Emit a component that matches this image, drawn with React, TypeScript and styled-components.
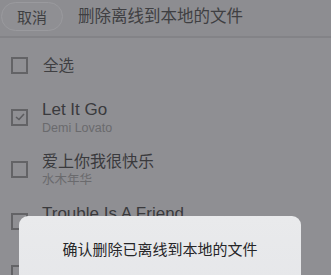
import * as React from 'react';
import styled, { createGlobalStyle } from 'styled-components';

const GlobalStyle = createGlobalStyle`
  html, body {
    margin: 0;
    padding: 0;
    background: #8f8f93;
    overflow: hidden;
  }
  body {
    font-family: 'Liberation Sans', 'Noto Sans CJK SC', sans-serif;
  }
`;

// rows below the dialog only show their checkbox / top of the title
const songs = [
  { title: 'Let It Go', artist: 'Demi Lovato', checked: true },
  { title: '爱上你我很快乐', artist: '水木年华', checked: false },
  { title: 'Trouble Is A Friend', artist: '', checked: false },
  { title: '', artist: '', checked: false },
];

export default function App() {
  return (
    <Screen>
      <GlobalStyle />
      <Header>
        <CancelButton>取消</CancelButton>
        <Title>删除离线到本地的文件</Title>
      </Header>
      <SelectAllRow>
        <CheckBox />
        <RowLabel>全选</RowLabel>
      </SelectAllRow>
      {songs.map((s, i) => (
        <SongRow key={i}>
          <CheckBox>
            {s.checked && (
              <svg width="10" height="8" viewBox="0 0 10 8">
                <path
                  d="M1 4 L4 6.5 L9 1"
                  fill="none"
                  stroke="#5c5c5f"
                  strokeWidth="1.6"
                />
              </svg>
            )}
          </CheckBox>
          {s.title && (
            <SongText>
              <SongTitle $latin={/^[A-Za-z]/.test(s.title)}>{s.title}</SongTitle>
              <SongArtist>{s.artist}</SongArtist>
            </SongText>
          )}
        </SongRow>
      ))}
      <Dialog>
        <DialogText>确认删除已离线到本地的文件</DialogText>
      </Dialog>
    </Screen>
  );
}

const Screen = styled.div`
  position: relative;
  width: 331px;
  height: 275px;
  overflow: hidden;
  background: #8f8f93;
`;

const Header = styled.div`
  display: flex;
  align-items: center;
  gap: 15px;
  height: 36px;
  padding: 0 0 0 1px;
  background: #8d8d91;
  border-bottom: 2px solid #838387;
`;

const CancelButton = styled.div`
  display: flex;
  align-items: center;
  justify-content: center;
  width: 60px;
  height: 27px;
  margin-top: -3px;
  border: 1px solid #9a9a9e;
  border-radius: 15px;
  background: #8f8f93;
  color: #3f3f42;
  font-size: 15px;
`;

const Title = styled.div`
  margin-top: -7px;
  color: #3f3f42;
  font-size: 16.5px;
`;

const SelectAllRow = styled.div`
  display: flex;
  align-items: center;
  gap: 15px;
  height: 52px;
  padding-left: 11px;
`;

const SongRow = styled.div`
  display: flex;
  align-items: center;
  gap: 14px;
  height: 52px;
  padding-left: 11px;
`;

const CheckBox = styled.div`
  box-sizing: border-box;
  display: flex;
  align-items: center;
  justify-content: center;
  width: 17px;
  height: 17px;
  margin-top: 2px;
  border: 2px solid #636366;
  flex-shrink: 0;
`;

const RowLabel = styled.div`
  color: #3f3f42;
  font-size: 15.5px;
`;

const SongText = styled.div`
  display: flex;
  flex-direction: column;
  margin-top: 3px;
`;

const SongTitle = styled.div<{ $latin: boolean }>`
  color: #3a3a3d;
  font-size: ${p => (p.$latin ? '17px' : '16px')};
  line-height: 20px;
  height: 20px;
`;

const SongArtist = styled.div`
  color: #6a6a6d;
  font-size: 12.5px;
  line-height: 16px;
  height: 16px;
`;

const Dialog = styled.div`
  position: absolute;
  left: 19px;
  top: 216px;
  width: 282px;
  height: 120px;
  border-radius: 9px;
  background: linear-gradient(180deg, #e9eaec 0%, #e4e5e8 100%);
  display: flex;
  justify-content: center;
`;

const DialogText = styled.div`
  margin-top: 24px;
  color: #262628;
  font-size: 15px;
  line-height: 20px;
`;
